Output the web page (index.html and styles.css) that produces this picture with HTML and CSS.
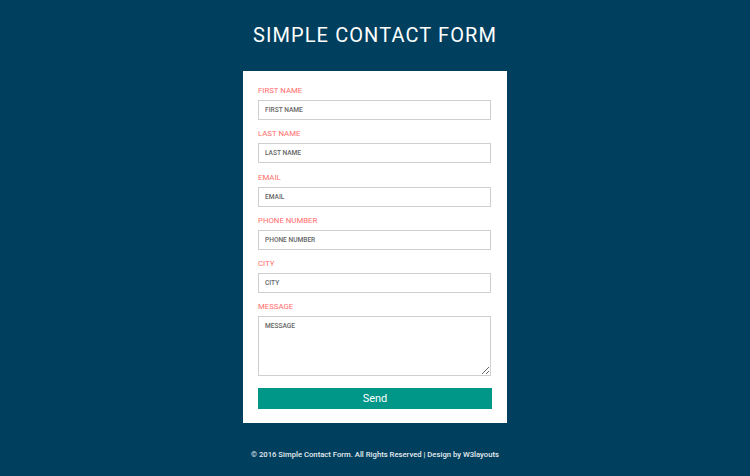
FILE: index.html
```html
<!DOCTYPE html>
<html>
<head>
<meta charset="utf-8">
<link rel="stylesheet" href="styles.css">
</head>
<body>
<h1 class="title">SIMPLE CONTACT FORM</h1>
<form class="card">
  <label class="lbl">FIRST NAME</label>
  <input class="field" type="text" placeholder="FIRST NAME">
  <label class="lbl">LAST NAME</label>
  <input class="field" type="text" placeholder="LAST NAME">
  <label class="lbl">EMAIL</label>
  <input class="field" type="text" placeholder="EMAIL">
  <label class="lbl">PHONE NUMBER</label>
  <input class="field" type="text" placeholder="PHONE NUMBER">
  <label class="lbl">CITY</label>
  <input class="field" type="text" placeholder="CITY">
  <label class="lbl">MESSAGE</label>
  <textarea class="field area" placeholder="MESSAGE"></textarea>
  <button class="send" type="button">Send</button>
</form>
<p class="footer">© 2016 Simple Contact Form. All Rights Reserved | Design by W3layouts</p>
</body>
</html>
```
FILE: styles.css
```css
html, body {
  margin: 0;
  padding: 0;
}
body {
  background: #003f5e;
  font-family: Roboto, "Liberation Sans", sans-serif;
  height: 476px;
  overflow: hidden;
}
.title {
  margin: 0;
  padding-top: 24px;
  height: 47px;
  box-sizing: border-box;
  text-align: center;
  color: #ffffff;
  font-size: 20px;
  font-weight: 400;
  letter-spacing: 1.1px;
  line-height: 22px;
}
.card {
  width: 264px;
  margin: 24px auto 0;
  background: #ffffff;
  box-sizing: border-box;
  padding: 14px 15px 14px 15px;
  display: flex;
  flex-direction: column;
}
.lbl {
  display: block;
  color: #ff6b6b;
  font-size: 7.8px;
  line-height: 11px;
  height: 11px;
  margin-bottom: 4px;
}
.field {
  display: block;
  width: 233px;
  height: 20px;
  box-sizing: border-box;
  border: 1px solid #cfcfcf;
  padding: 0 6px;
  margin: 0 0 8.3px 0;
  font-family: Roboto, "Liberation Sans", sans-serif;
  font-size: 6.6px;
  font-weight: 500;
  color: #555;
  outline: none;
}
.field::placeholder {
  color: #666;
  opacity: 1;
}
.area {
  height: 60px;
  padding-top: 5px;
  margin-bottom: 11.5px;
  resize: vertical;
}
.send {
  width: 234px;
  height: 21px;
  border: none;
  background: #009688;
  color: #ffffff;
  font-family: Roboto, "Liberation Sans", sans-serif;
  font-size: 11px;
  padding: 0;
}
.footer {
  margin: 26px 0 0;
  text-align: center;
  color: #e6ecf0;
  font-size: 7.7px;
  font-weight: 500;
  line-height: 12px;
}
```
